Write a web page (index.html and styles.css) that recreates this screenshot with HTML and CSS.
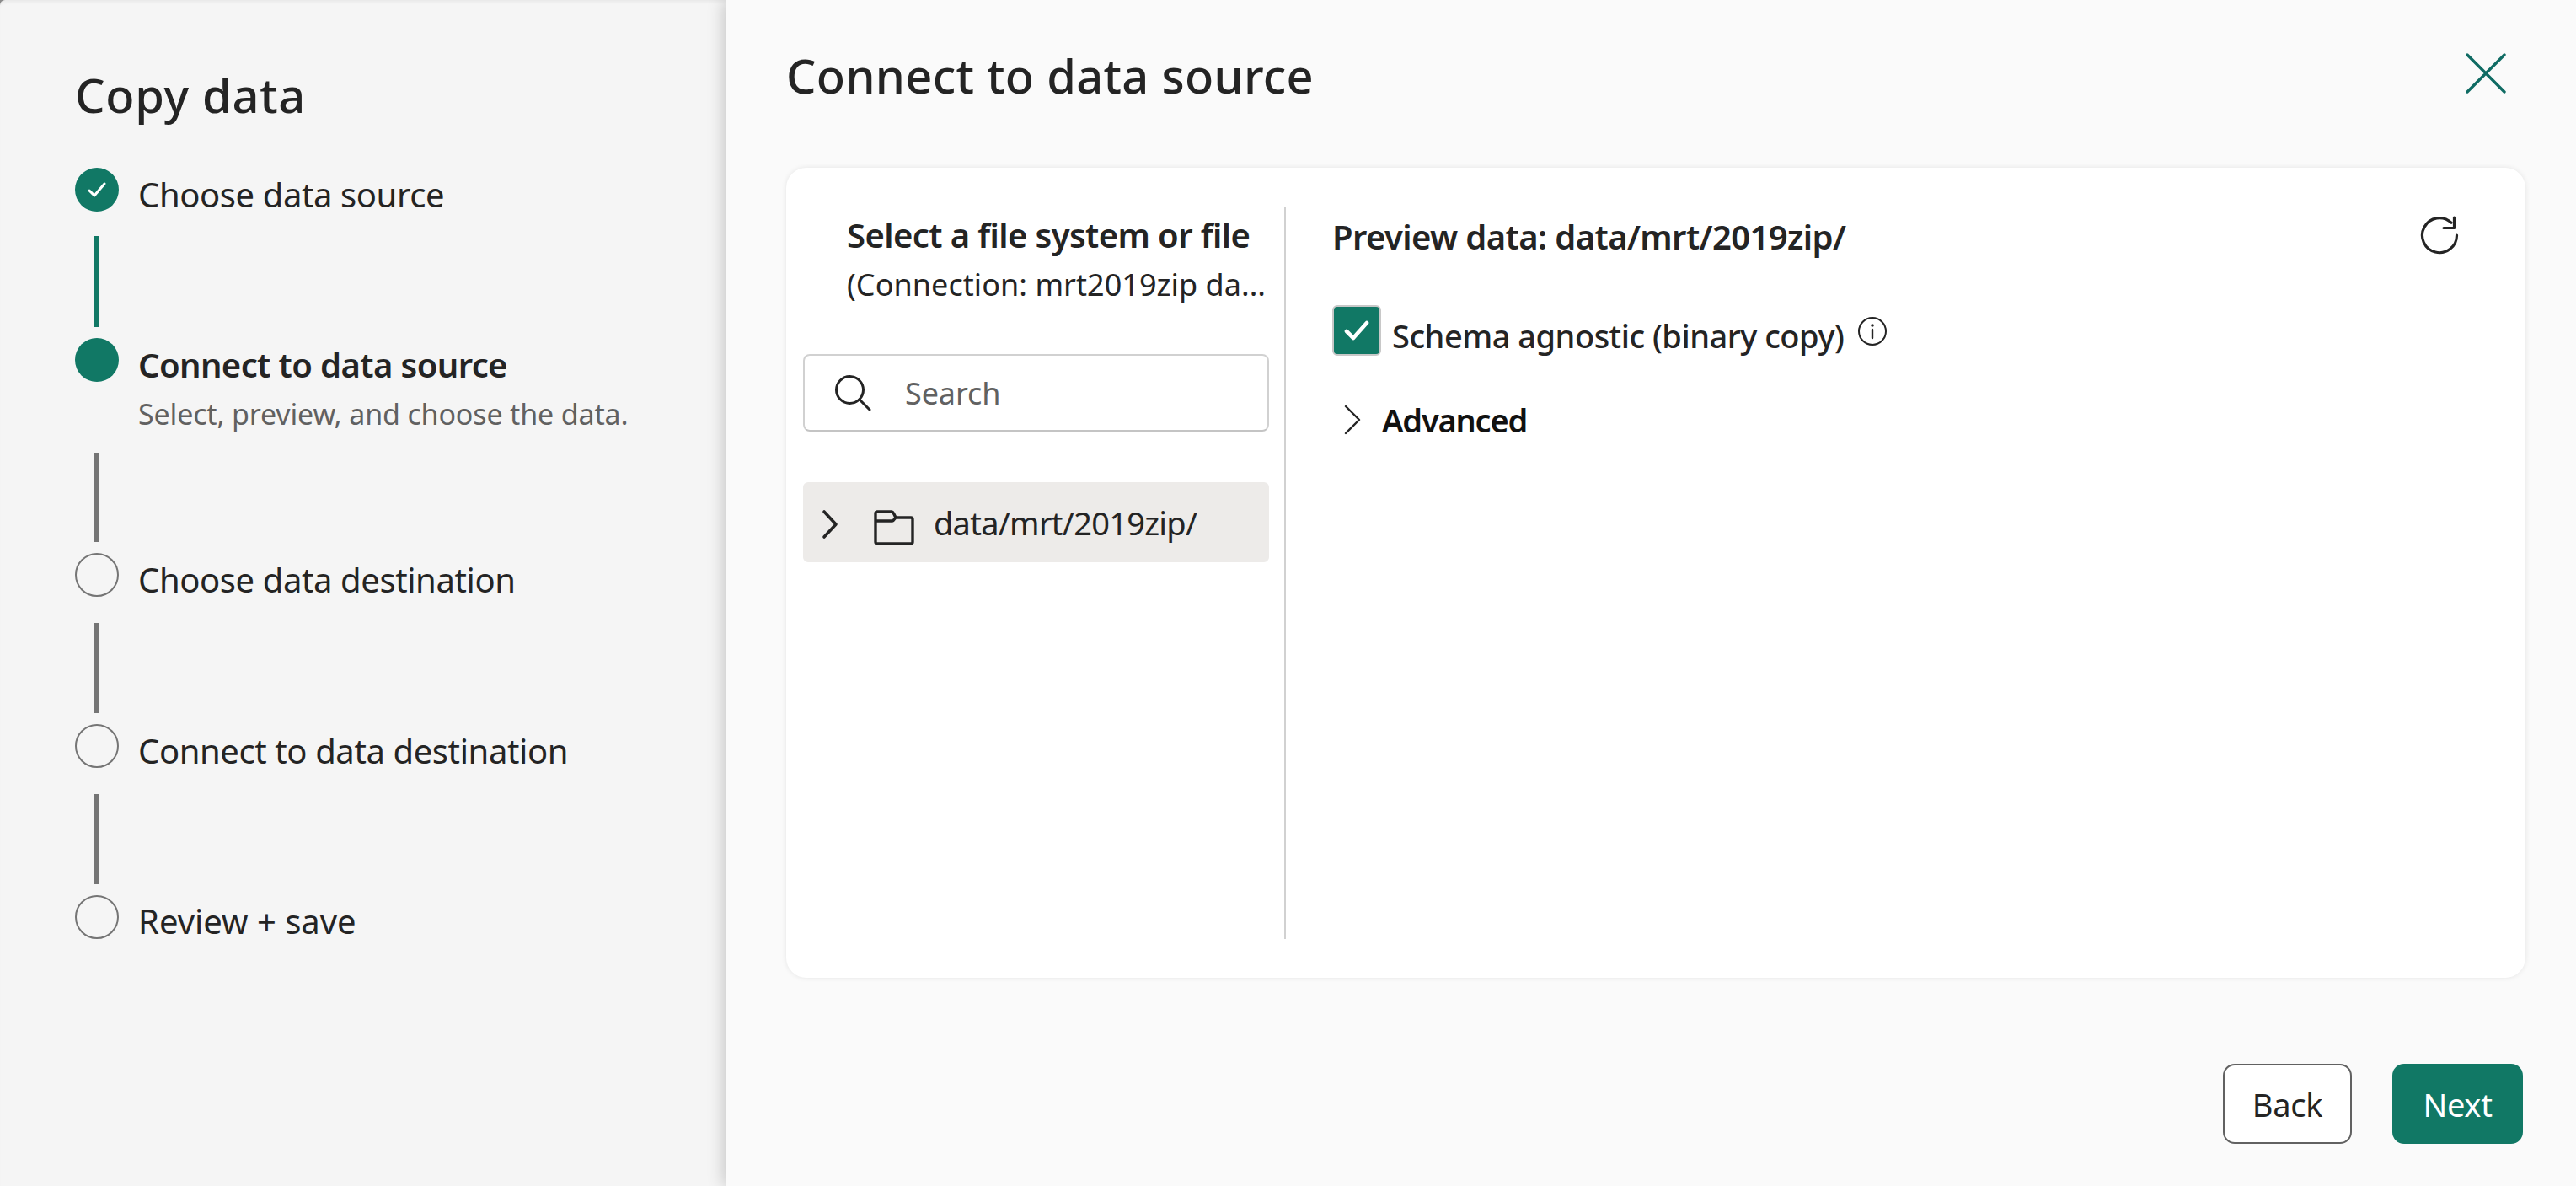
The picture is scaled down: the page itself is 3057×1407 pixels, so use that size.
FILE: index.html
```html
<!DOCTYPE html>
<html lang="en">
<head>
<meta charset="utf-8">
<title>Copy data</title>
<link rel="stylesheet" href="styles.css">
</head>
<body>
<div class="app">
  <aside class="side">
    <h1 class="side-title">Copy data</h1>
    <ol class="steps">
      <li class="step step-first">
        <span class="dot dot-done">
          <svg class="dot-check" viewBox="0 0 24 24"><path d="M3 13l6 6L21 5" fill="none" stroke="#fff" stroke-width="3" stroke-linecap="round" stroke-linejoin="round"/></svg>
        </span>
        <span class="label">Choose data source</span>
      </li>
      <li class="line line-done line-a"></li>
      <li class="step step-active">
        <span class="dot dot-done"></span>
        <div class="label-col">
          <span class="label label-bold">Connect to data source</span>
          <span class="label-sub">Select, preview, and choose the data.</span>
        </div>
      </li>
      <li class="line line-b"></li>
      <li class="step"><span class="dot"></span><span class="label">Choose data destination</span></li>
      <li class="line line-c"></li>
      <li class="step"><span class="dot"></span><span class="label">Connect to data destination</span></li>
      <li class="line line-c"></li>
      <li class="step"><span class="dot"></span><span class="label label-wide">Review + save</span></li>
    </ol>
  </aside>
  <main class="main">
    <header class="head">
      <h2 class="head-title">Connect to data source</h2>
      <svg class="close" viewBox="0 0 48 48"><path d="M2 2l44 44M46 2L2 46" fill="none" stroke="#0f6b63" stroke-width="3.4" stroke-linecap="round"/></svg>
    </header>
    <section class="card">
      <div class="pane-left">
        <div class="pane-title">Select a file system or file</div>
        <div class="pane-sub">(Connection: mrt2019zip da...</div>
        <div class="search">
          <svg class="search-icon" viewBox="0 0 44 44"><circle cx="18.5" cy="18.5" r="16" fill="none" stroke="#242424" stroke-width="3"/><path d="M30 30l12 12" stroke="#242424" stroke-width="3" stroke-linecap="round"/></svg>
          <span class="search-text">Search</span>
        </div>
        <div class="row">
          <svg class="row-chevron" viewBox="0 0 20 36"><path d="M3 3l14 15L3 33" fill="none" stroke="#242424" stroke-width="3.6" stroke-linecap="round" stroke-linejoin="round"/></svg>
          <svg class="folder" viewBox="0 0 48 42"><path d="M2 4q0-2 2-2h17q1.500 0 2.500 2l2.500 5h18q2 0 2 2v27q0 2-2 2H4q-2 0-2-2zM2 13h19q1.500 0 2.500-1l2.500-3" fill="none" stroke="#242424" stroke-width="3.400" stroke-linejoin="round"/></svg>
          <span class="row-text">data/mrt/2019zip/</span>
        </div>
      </div>
      <div class="pane-right">
        <div class="preview-head">
          <span class="pane-title">Preview data: data/mrt/2019zip/</span>
          <svg class="refresh" viewBox="0 0 46 46"><path d="M43.500 23A20.500 20.500 0 1 1 37 8.200" fill="none" stroke="#242424" stroke-width="3.200" stroke-linecap="round"/><path d="M40.500 2v12.500H28" fill="none" stroke="#242424" stroke-width="3.200" stroke-linecap="round" stroke-linejoin="round"/></svg>
        </div>
        <div class="check-row">
          <span class="checkbox"><svg class="check-mark" viewBox="0 0 30 24"><path d="M3 13l8 8L27 3" fill="none" stroke="#fff" stroke-width="4.600" stroke-linecap="round" stroke-linejoin="round"/></svg></span>
          <span class="check-label">Schema agnostic (binary copy)</span>
          <svg class="info" viewBox="0 0 36 36"><circle cx="18" cy="18" r="16" fill="none" stroke="#242424" stroke-width="2"/><path d="M18 16v10" stroke="#242424" stroke-width="2.400" stroke-linecap="round"/><circle cx="18" cy="11" r="1.800" fill="#242424"/></svg>
        </div>
        <div class="adv-row">
          <svg class="adv-chevron" viewBox="0 0 22 36"><path d="M3 2l16 16L3 34" fill="none" stroke="#242424" stroke-width="2.400" stroke-linecap="round" stroke-linejoin="round"/></svg>
          <span class="adv-label">Advanced</span>
        </div>
      </div>
    </section>
    <footer class="foot">
      <button class="btn btn-back">Back</button>
      <button class="btn btn-next">Next</button>
    </footer>
  </main>
</div>
</body>
</html>
```
FILE: styles.css
```css
* { box-sizing: border-box; }
html, body { margin: 0; height: 100%; }
body { font-family: "Noto Sans", "Open Sans", sans-serif; color: #242424; background: #fafafa; overflow: hidden; }
.app { display: flex; height: 1407px; background: #8a8a8a; }

.side { width: 861px; flex: none; background: #f5f5f5; border-top-left-radius: 6px; box-shadow: inset 0 4px 4px -2px rgba(0,0,0,.06); padding: 74px 0 0 88px; }
.side-title { margin: 0; font-size: 56px; line-height: 76px; font-weight: 500; letter-spacing: 0.7px; padding-left: 1px; }
.steps { list-style: none; margin: 49px 0 0; padding: 0 0 0 1px; }
.step { display: flex; gap: 23px; align-items: flex-start; height: 52px; }
.step-active { height: 136px; }
.dot { width: 52px; height: 52px; flex: none; border-radius: 50%; border: 2px solid #757575; display: flex; align-items: center; justify-content: center; }
.dot-done { background: #117865; border: none; }
.dot-check { width: 24px; height: 24px; }
.label { font-size: 40px; line-height: 58px; letter-spacing: -0.4px; white-space: nowrap; display: block; margin-top: 3px; }
.label-wide { letter-spacing: 0; margin-top: 2px; }
.label-col { display: flex; flex-direction: column; }
.label-bold { font-weight: 600; letter-spacing: -0.6px; }
.label-sub { font-size: 34px; line-height: 46px; color: #616161; letter-spacing: -0.16px; white-space: nowrap; margin-top: 6px; }
.line { width: 5px; background: #757575; margin-left: 23px; }
.line-done { background: #117865; }
.line-a { height: 108px; margin-top: 29px; margin-bottom: 13px; }
.line-b { height: 106px; margin-bottom: 13px; }
.line-c { height: 107px; margin-top: 31px; margin-bottom: 13px; }

.main { flex: 1; min-width: 0; background: #fafafa; box-shadow: 0 0 20px rgba(0,0,0,.24); position: relative; padding: 0 60px 0 72px; display: flex; flex-direction: column; }
.head { display: flex; justify-content: space-between; align-items: center; height: 199px; padding: 0 0 22px 0; }
.head-title { margin: 0; font-size: 56px; font-weight: 500; letter-spacing: 0.3px; white-space: nowrap; }
.close { width: 48px; height: 48px; margin: -3px 23px 0 0; }

.card { display: flex; height: 961px; background: #fff; border-radius: 24px; box-shadow: 0 0 6px rgba(0,0,0,.09); padding-top: 47px; }
.pane-left { width: 593px; height: 868px; flex: none; border-right: 2px solid #d1d1d1; padding: 0 18px 0 20px; }
.pane-title { font-size: 40px; line-height: 60px; font-weight: 600; letter-spacing: -0.6px; white-space: nowrap; }
.pane-left .pane-title { padding-left: 52px; margin-top: 3px; }
.pane-sub { font-size: 36px; line-height: 50px; padding-left: 52px; margin-top: 4px; letter-spacing: 0.05px; white-space: nowrap; overflow: hidden; }
.search { display: flex; align-items: center; height: 92px; margin-top: 57px; background: #fff; border: 2px solid #d1d1d1; border-bottom-color: #c4c4c4; border-radius: 8px; padding-left: 35px; gap: 40px; }
.search-icon { width: 44px; height: 44px; flex: none; }
.search-text { font-size: 36px; color: #616161; letter-spacing: -0.1px; padding-top: 1px; }
.row { display: flex; align-items: center; height: 95px; margin-top: 60px; background: #edebe9; border-radius: 6px; padding-left: 22px; }
.row-chevron { width: 20px; height: 36px; flex: none; margin-top: 4px; }
.folder { width: 48px; height: 42px; flex: none; margin: 12px 0 0 42px; }
.row-text { font-size: 38px; margin-left: 23px; letter-spacing: -0.75px; white-space: nowrap; }

.pane-right { flex: 1; min-width: 0; padding: 0 79px 0 55px; }
.preview-head { display: flex; justify-content: space-between; align-items: center; height: 66px; padding-top: 3px; }
.refresh { width: 46px; height: 46px; margin-top: -4px; }
.check-row { display: flex; align-items: center; margin-top: 50px; height: 60px; }
.checkbox { width: 58px; height: 60px; flex: none; background: #117865; border: 2px solid #c8c8c8; border-radius: 6px; display: flex; align-items: center; justify-content: center; }
.check-mark { width: 30px; height: 24px; }
.check-label { font-size: 38px; font-weight: 500; margin-left: 13px; letter-spacing: -0.5px; white-space: nowrap; padding-top: 12px; }
.info { width: 36px; height: 36px; margin-left: 16px; flex: none; margin-top: 2px; }
.adv-row { display: flex; align-items: center; margin-top: 46px; height: 60px; padding-left: 13px; }
.adv-chevron { width: 22px; height: 36px; flex: none; }
.adv-label { font-size: 38px; font-weight: 600; margin-left: 24px; color: #111; letter-spacing: -1.2px; }

.foot { display: flex; justify-content: flex-end; gap: 48px; margin-top: 102px; padding-right: 3px; }
.btn { height: 95px; border-radius: 14px; font-family: inherit; font-size: 38px; padding: 0; letter-spacing: -0.3px; }
.btn-back { width: 153px; background: #fff; border: 2px solid #616161; color: #242424; }
.btn-next { width: 155px; background: #117865; border: none; color: #fff; }
```
